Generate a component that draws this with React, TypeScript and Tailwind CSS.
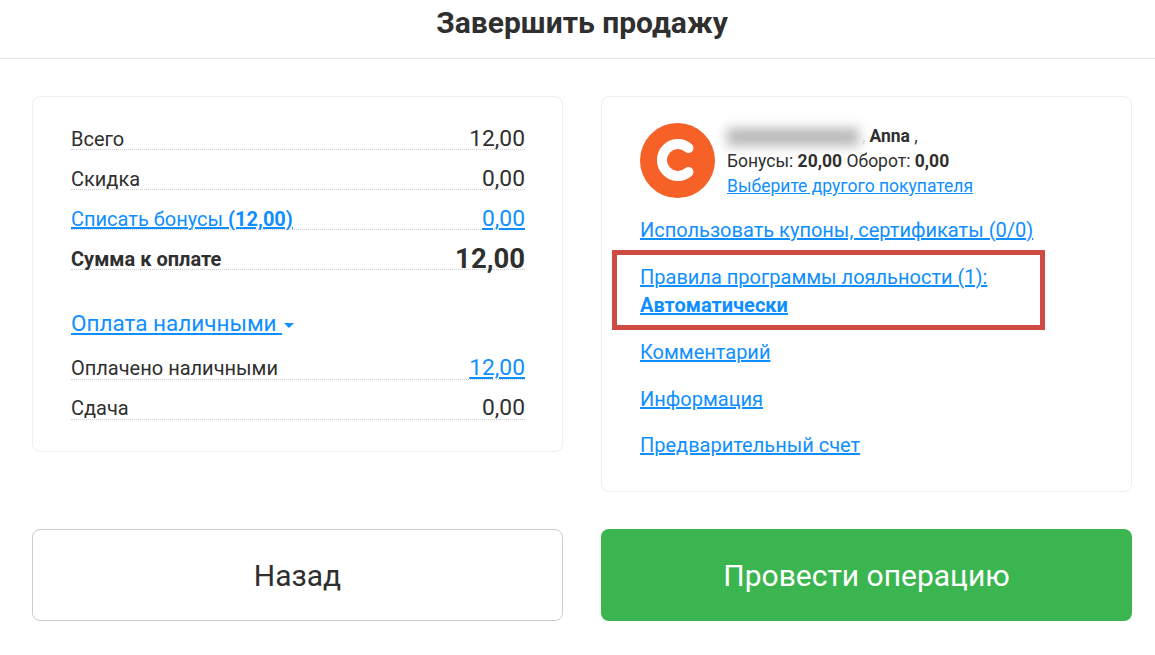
function Row({ label, value, rowClass = '', valueClass = 'text-[22.8px] leading-[21px]' }: { label: React.ReactNode; value: React.ReactNode; rowClass?: string; valueClass?: string }) {
  return (
    <div className={`flex h-10 items-end justify-between border-b border-dotted border-[#cccccc] ${rowClass}`}>
      <span className="text-[20px] leading-[20px]">{label}</span>
      <span className={valueClass}>{value}</span>
    </div>
  );
}

const linkClass = 'text-[#0f8fff] underline';

export default function App() {
  return (
    <div className="h-[655px] w-[1155px] overflow-hidden bg-white font-['Roboto',sans-serif] text-[#2f2f2f]">
      <header className="flex h-[59px] items-center justify-center border-b border-[#e4e4e4] pl-[9px]">
        <h1 className="pb-[14px] text-[30px] font-bold">Завершить продажу</h1>
      </header>

      <div className="grid grid-cols-[531px_531px] items-start gap-x-[38px] px-[32px] pt-[37px]">
        <section className="h-[356px] rounded-lg border border-[#eeeeee] pt-[13px] pr-[37px] pl-[38px]">
          <Row label="Всего" value="12,00" />
          <Row label="Скидка" value="0,00" />
          <Row
            label={<a className={linkClass}>Списать бонусы <b>(12,00)</b></a>}
            value={<a className={linkClass}>0,00</a>}
          />
          <Row label={<b>Сумма к оплате</b>} value={<b>12,00</b>} valueClass="text-[27.5px] leading-[20px]" />

          <div className="mt-[38px] h-[32px] text-[22.5px] leading-[31px]">
            <a className={linkClass}>Оплата наличными </a>
            <span className="mb-[3px] ml-[2px] inline-block h-0 w-0 border-x-[5px] border-t-[5px] border-x-transparent border-t-[#0f8fff]" />
          </div>

          <div>
            <Row rowClass="pb-px" label="Оплачено наличными" value={<a className={linkClass}>12,00</a>} />
            <Row rowClass="pb-px" label="Сдача" value="0,00" />
          </div>
        </section>

        <section className="h-[396px] rounded-lg border border-[#eeeeee] pt-[26px] pl-[38px]">
          <div className="flex items-start gap-[12px]">
            <svg className="h-[75px] w-[75px] shrink-0" viewBox="0 0 75 75">
              <circle cx="37.5" cy="37.5" r="37.5" fill="#f56126" />
              <path d="M48.5 25A16 16 0 1 0 48.5 49" fill="none" stroke="#ffffff" strokeWidth="10" strokeLinecap="round" />
            </svg>
            <div className="mt-px text-[17.5px] leading-[25px]">
              <div className="flex items-center">
                <span className="h-[18px] w-[132px] bg-[#b8b8b8] blur-[6px]" />
                <span className="ml-[3px] text-[#d5dde5]">,</span>
                <span className="ml-[4px] font-bold">Anna</span>
                <span>&nbsp;,</span>
              </div>
              <div>
                Бонусы: <b>20,00</b> Оборот: <b>0,00</b>
              </div>
              <a className={linkClass}>Выберите другого покупателя</a>
            </div>
          </div>

          <div className="relative mt-[17px] flex flex-col items-start text-[20px] leading-[28px]">
            <a className={linkClass}>Использовать купоны, сертификаты (0/0)</a>
            <a className={`mt-[19px] ${linkClass}`}>Правила программы лояльности (1):</a>
            <a className={`font-bold ${linkClass}`}>Автоматически</a>
            <a className={`mt-[19px] ${linkClass}`}>Комментарий</a>
            <a className={`mt-[19px] ${linkClass}`}>Информация</a>
            <a className={`mt-[18px] ${linkClass}`}>Предварительный счет</a>
            <div className="absolute top-[34px] left-[-28px] h-[80px] w-[433px] border-[5px] border-[#cf4a43]" />
          </div>
        </section>
      </div>

      <div className="grid grid-cols-[531px_531px] gap-x-[38px] px-[32px] pt-[37px]">
        <button className="flex h-[92px] items-center justify-center rounded-lg border border-[#cccccc] text-[30px]">
          Назад
        </button>
        <button className="flex h-[92px] items-center justify-center rounded-lg bg-[#3bb54f] text-[30px] text-white">
          Провести операцию
        </button>
      </div>
    </div>
  );
}
